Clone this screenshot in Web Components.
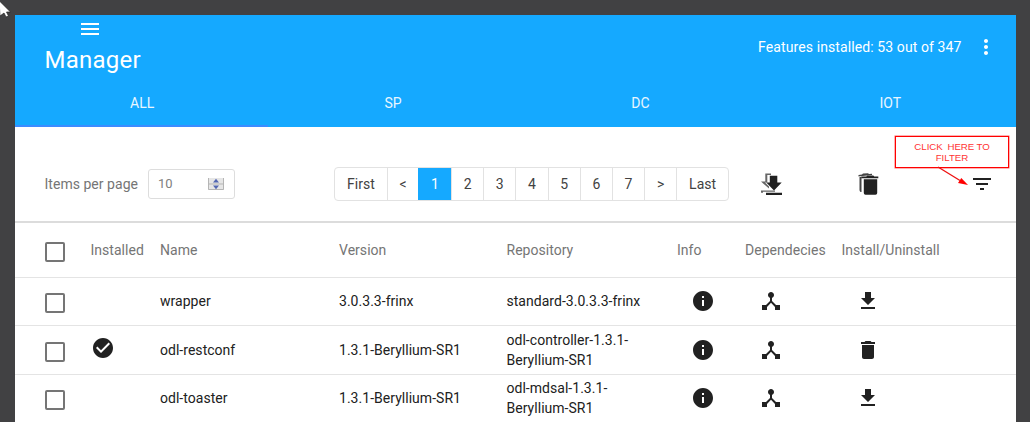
<!DOCTYPE html>
<html lang="en">
<head>
<meta charset="utf-8">
<title>Manager</title>
<style>
html,body{margin:0;height:422px;overflow:hidden;background:#414143}
body{font:14px/20px Roboto,"Liberation Sans",sans-serif;letter-spacing:.03px;color:#212121}
</style>
</head>
<body>
<feature-manager></feature-manager>
<script>
const ICONS = {
  menu:'<path d="M3 18h18v-2H3v2zm0-5h18v-2H3v2zm0-7v2h18V6H3z"/>',
  more:'<path d="M12 8c1.1 0 2-.9 2-2s-.9-2-2-2-2 .9-2 2 .9 2 2 2zm0 2c-1.1 0-2 .9-2 2s.9 2 2 2 2-.9 2-2-.9-2-2-2zm0 6c-1.1 0-2 .9-2 2s.9 2 2 2 2-.9 2-2-.9-2-2-2z"/>',
  info:'<path d="M12 2C6.48 2 2 6.48 2 12s4.48 10 10 10 10-4.48 10-10S17.52 2 12 2zm1 15h-2v-6h2v6zm0-8h-2V7h2v2z"/>',
  check:'<path d="M12 2C6.48 2 2 6.48 2 12s4.48 10 10 10 10-4.48 10-10S17.52 2 12 2zm-2 15l-5-5 1.41-1.41L10 14.17l7.59-7.59L19 8l-9 9z"/>',
  hub:'<path d="M17 16l-4-4V8.82C14.16 8.4 15 7.3 15 6c0-1.66-1.34-3-3-3S9 4.34 9 6c0 1.3.84 2.4 2 2.82V12l-4 4H3v5h5v-3.05l4-4.2 4 4.2V21h5v-5h-4z"/>',
  download:'<path d="M19 9h-4V3H9v6H5l7 7 7-7zM5 18v2h14v-2H5z"/>',
  trash:'<path d="M6 19c0 1.1.9 2 2 2h8c1.1 0 2-.9 2-2V7H6v12zM19 4h-3.5l-1-1h-5l-1 1H5v2h14V4z"/>',
  filter:'<path d="M10 18h4v-2h-4v2zM3 6v2h18V6H3zm3 7h12v-2H6v2z"/>',
  downloads:'<path fill="#666" d="M6.300 1.500H12V3H8.300v7.500H6l4 4v2L2 9.500h4.300zM2 18.500h14v1.300H4v1H2z"/><path d="M10.800 3.700h7.500V10.500h4.400l-7.700 8-7.700-8h3.500zM7 20.700h16v2.300H7z"/>',
  trashes:'<path fill="#444" d="M2.500 3l3.500-.5 1-1 5-.3 1 .8 3-.2V3L4 4.200l-1.500.3zM3.500 5h2v15h-1q-1-1-1-2z"/><path d="M7.800 7.200h13.400V21q0 1.700-1.700 1.700h-10q-1.700 0-1.700-1.700zM5.300 4.600h5l1-1.200h6l1 1.200h4v1.600h-17z"/>'
};
const define = (name, html) => customElements.define(name, class extends HTMLElement {
  connectedCallback(){
    if (this.shadowRoot) return;
    this.attachShadow({mode:'open'}).innerHTML = typeof html === 'function' ? html(this) : html;
  }
});
define('md-icon', el => `<style>:host{display:inline-flex;width:24px;height:24px;flex:none}svg{width:100%;height:100%;fill:currentColor}</style><svg viewBox="0 0 24 24">${ICONS[el.getAttribute('name')]}</svg>`);
define('md-check', '<style>:host{display:block;box-sizing:border-box;width:20px;height:20px;border:2px solid #757575;border-radius:2px}</style>');
define('app-bar', `<style>
:host{display:flex;justify-content:space-between;height:65px;box-sizing:border-box;padding:0 18px 0 29.500px;background:#15a9ff;color:#fff}
.left{display:flex;flex-direction:column}
.left md-icon{margin:2px 0 0 33.400px}
.title{font-size:24px;line-height:28px;margin-top:5px;letter-spacing:.25px}
.right{display:flex;align-items:center;gap:12.500px;letter-spacing:.1px;padding-bottom:1px;height:64px;box-sizing:border-box}
</style><div class="left"><md-icon name="menu"></md-icon><div class="title"><slot></slot></div></div>
<div class="right"><slot name="status"></slot><md-icon name="more"></md-icon></div>`);
define('tab-strip', `<style>:host{display:grid;grid-template-columns:253.500px 248px 247px 252.500px;height:47px;background:#15a9ff;color:#e9f6ff}</style><slot></slot>`);
define('tab-item', `<style>:host{display:flex;align-items:center;justify-content:center;position:relative;padding:0 0 2px 1px}:host([active])::after{content:"";position:absolute;left:0;bottom:0;width:253px;height:2px;background:#3c8cff}</style><slot></slot>`);
define('page-links', `<style>:host{display:flex;box-sizing:border-box;height:34px;border:1px solid #e2e2e2;border-radius:4px;overflow:hidden;color:#424242}
span{box-sizing:border-box;width:32.200px;flex:none;border-left:1px solid #e2e2e2;display:flex;align-items:center;justify-content:center}
.first{width:52px;border:0}.prev{width:31px}.last{flex:1}.on{background:#15a9ff;color:#fff;border-color:#15a9ff;width:33px}</style>
<span class="first">First</span><span class="prev">&lt;</span><span class="on">1</span><span>2</span><span>3</span><span>4</span><span>5</span><span>6</span><span>7</span><span>&gt;</span><span class="last">Last</span>`);
define('number-field', `<style>:host{display:flex;align-items:center;justify-content:space-between;box-sizing:border-box;width:87px;height:30px;border:1px solid #ddd;border-radius:3px;padding:0 10px 0 9px;font-size:13px;color:#808080}
svg{width:16px;height:12px}</style><slot></slot><svg viewBox="0 0 16 12"><path fill="#e6e6e6" d="M0 0h16v12H0z"/><path stroke="#b5b5b5" d="M.5 0v11.500h15V0M0 6h16" fill="none"/><path fill="#5267b2" d="M8 .8l3 3.700H5zM8 11.200l3-3.700H5z"/></svg>`);
define('list-toolbar', `<style>:host{display:grid;grid-template-columns:103.500px 186px 424.500px 97px 114px 1fr;align-items:center;height:96px;padding:20px 0 0 29.500px;box-sizing:border-box;border-bottom:2px solid #dcdcdc;color:#757575}
page-links{width:395px}md-icon{color:#212121}</style>
<span>Items per page</span><number-field>10</number-field><page-links></page-links><md-icon name="downloads"></md-icon><md-icon name="trashes"></md-icon><md-icon name="filter"></md-icon>`);
define('feature-row', el => {
  const a = n => el.getAttribute(n) || '';
  const head = el.hasAttribute('head');
  return `<style>:host{display:grid;grid-template-columns:46px 69.500px 179px 167.500px 170.500px 68px 96.500px 1fr;align-items:center;height:${head?'55px':'48.300px'};box-sizing:border-box;padding:0 0 ${head?0:.5}px 29.500px;border-bottom:1px solid #e4e4e4;${head?'color:#757575':''}}
md-check{margin-top:${head?'3px':'4px'}}.ic{padding-left:14px;display:flex}.inst{display:flex;margin-top:-4px}.repo{width:150px}</style>
<md-check></md-check>` + (head
 ? '<span>Installed</span><span>Name</span><span>Version</span><span>Repository</span><span>Info</span><span>Dependecies</span><span>Install/Uninstall</span>'
 : `<span class="inst">${el.hasAttribute('installed')?'<md-icon name="check"></md-icon>':''}</span><span>${a('name')}</span><span>${a('version')}</span><span class="repo">${a('repo')}</span><span class="ic"><md-icon name="info"></md-icon></span><span class="ic"><md-icon name="hub"></md-icon></span><span class="ic"><md-icon name="${el.hasAttribute('installed')?'trash':'download'}"></md-icon></span>`);
});
define('hint-callout', `<style>:host{position:absolute;left:895px;top:136px;width:115px;height:54px}
div{box-sizing:border-box;width:114px;height:32px;border:1px solid #f00;box-shadow:0 0 0 .5px #f66;background:#fff;color:#f33;font:9.700px/11px "Liberation Sans",Arial,sans-serif;letter-spacing:0;word-spacing:-.400px;text-align:center;padding-top:4px;white-space:pre}
svg{position:absolute;left:0;top:0;width:115px;height:54px}</style><div><slot></slot></div>
<svg viewBox="0 0 115 54"><path d="M43 31l22 13.500" stroke="#e11" stroke-width="1.300"/><path fill="#f00" d="M73 49l-10-2 3.300-5z"/></svg>`);
define('mouse-pointer', `<style>:host{position:absolute;left:0;top:0;width:13px;height:18px}svg{display:block}</style><svg width="13" height="18"><path d="M-1 .5L10.500 12H6.500l2 4-2.500 1-2-4-4 3z" fill="#fff" stroke="#222" stroke-width=".7"/></svg>`);
define('feature-manager', `<style>:host{display:block;height:422px;overflow:hidden}main{margin:15px 14px 0 15px;background:#fff;height:407px;overflow:hidden}</style>
<main><app-bar>Manager<span slot="status">Features installed: 53 out of 347</span></app-bar>
<tab-strip><tab-item active>ALL</tab-item><tab-item>SP</tab-item><tab-item>DC</tab-item><tab-item>IOT</tab-item></tab-strip>
<list-toolbar></list-toolbar>
<feature-row head></feature-row>
<feature-row name="wrapper" version="3.0.3.3-frinx" repo="standard-3.0.3.3-frinx"></feature-row>
<feature-row installed name="odl-restconf" version="1.3.1-Beryllium-SR1" repo="odl-controller-1.3.1-Beryllium-SR1"></feature-row>
<feature-row name="odl-toaster" version="1.3.1-Beryllium-SR1" repo="odl-mdsal-1.3.1-Beryllium-SR1"></feature-row>
</main><hint-callout>CLICK  HERE TO
FILTER</hint-callout><mouse-pointer></mouse-pointer>`);
</script>
</body>
</html>
